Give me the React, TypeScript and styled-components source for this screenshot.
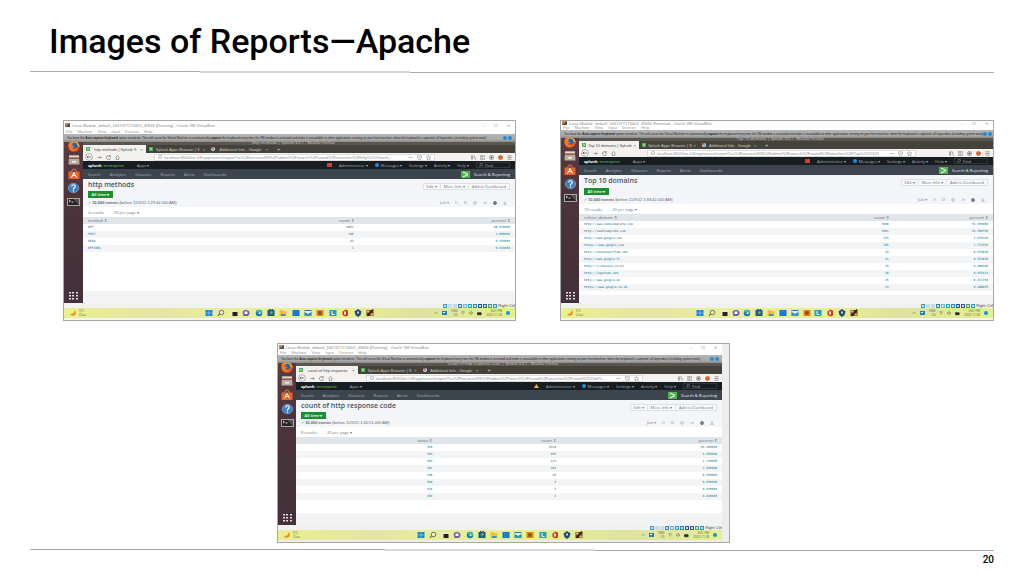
import React from "react";
import styled, { createGlobalStyle, css } from "styled-components";

const Global = createGlobalStyle`
  *, *::before, *::after { box-sizing: border-box; }
  body { margin: 0; background: #fff; }
  button, input { font: inherit; color: inherit; margin: 0; padding: 0; border: 0; background: none; }
  a { color: inherit; text-decoration: none; }
`;

/* ---------- slide ---------- */
const Slide = styled.main`
  min-height: 100vh;
  display: flex;
  flex-direction: column;
  padding: 0 30px;
  font-family: Roboto, sans-serif;
  color: #000;
`;
const Title = styled.h1`
  margin: 0;
  height: 71px;
  padding: 21px 0 0 19px;
  font-size: 34px;
  line-height: 40px;
  font-weight: 500;
  white-space: nowrap;
`;
const Rule = styled.div<{ $a: number; $b: number }>`
  display: grid;
  grid-template-columns: ${(p) => p.$a}fr ${(p) => p.$b}fr ${(p) => 964 - p.$a - p.$b}fr;
  height: 2px;
`;
const Seg = styled.span<{ $at: "top" | "both" | "bottom" }>`
  ${(p) => p.$at === "top" && css`border-top: 1px solid #a9a9a9;`}
  ${(p) => p.$at === "bottom" && css`border-bottom: 1px solid #a9a9a9;`}
  ${(p) => p.$at === "both" && css`background: #d4d5d4;`}
`;
const TopRow = styled.section`
  display: grid;
  grid-template-columns: 453fr 434fr;
  gap: 44px;
  min-height: 201px;
  margin: 47px 0 22px 33px;
`;
const BottomRow = styled.section`
  display: grid;
  grid-template-columns: 247fr 453fr 264fr;
  min-height: 200px;
  margin-bottom: 6px;
`;
const PageNumber = styled.footer`
  padding-top: 3px;
  text-align: right;
  font-size: 10px;
  line-height: 12px;
  font-weight: 500;
`;

/* ---------- virtual machine window ---------- */
const Frame = styled.article<{ $strip?: boolean }>`
  grid-column: ${(p) => (p.$strip ? 2 : "auto")};
  min-width: 0;
  display: flex;
  flex-direction: column;
  border: 1px solid #a6a6a6;
  padding-right: ${(p) => (p.$strip ? 7 : 0)}px;
  background: ${(p) => (p.$strip ? "#ededed" : "#f4f4f4")};
  font-family: "Open Sans", sans-serif;
  font-size: 4px;
  line-height: 5px;
  white-space: nowrap;
  overflow: hidden;
`;
const WinBar = styled.header<{ $h: number }>`
  height: ${(p) => p.$h}px;
  padding: 0 5px 0 1px;
  display: flex;
  align-items: center;
  justify-content: space-between;
  background: #fff;
  color: #8b8b8b;
  font-family: "Liberation Sans", sans-serif;
`;
const Inline = styled.span<{ $gap: number }>`
  display: flex;
  align-items: center;
  gap: ${(p) => p.$gap}px;
`;
const MenuBar = styled.nav`
  height: 5px;
  padding-left: 2px;
  display: flex;
  gap: 5px;
  background: #fff;
  color: #999;
  font-family: "Liberation Sans", sans-serif;
`;
const Warning = styled.div`
  height: 8px;
  padding: 0 3px;
  display: flex;
  align-items: center;
  justify-content: space-between;
  background: linear-gradient(#b4b4b4, #a8a8a8 70%, #8b8987);
  color: #1f1f1f;
  font-family: "Liberation Sans", sans-serif;
  font-size: 3px;
  overflow: hidden;
`;
const Desktop = styled.div<{ $side: number }>`
  flex: 1;
  display: grid;
  grid-template-columns: ${(p) => p.$side}px minmax(0, 1fr);
`;
const Launcher = styled.aside`
  display: flex;
  flex-direction: column;
  align-items: center;
  gap: 6px;
  padding-bottom: 3px;
  background: linear-gradient(#5c3b40, #4d343b 30%, #43303a);
`;
const Slot = styled.button`
  width: 12px;
  height: 8px;
  display: flex;
  align-items: center;
  justify-content: center;
  svg { flex: none; overflow: visible; }
  &:last-child { margin-top: auto; }
`;
const Browser = styled.div`
  display: flex;
  flex-direction: column;
  background: #fff;
`;
const BrowserTitle = styled.div`
  height: 3px;
  line-height: 1px;
  text-align: center;
  background: #5b564f;
  color: #d2cec6;
  padding-right: 12px;
`;
const Tabs = styled.div`
  height: 8px;
  display: flex;
  background: #45423b;
  color: #c8c5bd;
  font-family: "Liberation Sans", sans-serif;
`;
const Tab = styled.button<{ $on?: boolean }>`
  width: 14.5%;
  height: 8px;
  padding: 0 3px;
  display: flex;
  align-items: center;
  justify-content: space-between;
  line-height: 5px;
  ${(p) => p.$on && css`background: #f3f2f0; color: #4a4a48;`}
`;
const NewTab = styled.button`padding-left: 6px; font-size: 6px; line-height: 6px;`;
const AddressBar = styled.div`
  height: 8px;
  display: grid;
  grid-template-columns: 16.4% 65% 1fr;
  align-items: center;
  background: #f3f2f0;
  color: #666;
`;
const NavButtons = styled.div`
  display: flex;
  align-items: center;
  gap: 4px;
  padding-left: 2px;
`;
const UrlBox = styled.label`
  height: 7px;
  padding: 0 3px;
  display: flex;
  align-items: center;
  gap: 2px;
  border: 1px solid #dcdcdc;
  background: #fff;
  color: #888;
`;
const UrlInput = styled.input`
  flex: 1;
  min-width: 0;
  height: 5px;
  margin-right: 8px;
  outline: 0;
  font-family: "Liberation Sans", sans-serif;
  color: #8e8e8e;
`;
const Tools = styled.div`
  display: flex;
  align-items: center;
  justify-content: flex-end;
  gap: 4px;
  padding-right: 3px;
`;
const SplunkBar = styled.div`
  height: 8px;
  padding: 0 5px;
  display: flex;
  align-items: center;
  justify-content: space-between;
  background: #171d21;
  color: #a9afb3;
`;
const Brand = styled.b`
  margin-right: 13px;
  color: #fff;
  em { color: #5cae55; font-style: normal; font-weight: 600; }
`;
const Alert = styled.i<{ $warn?: boolean }>`
  width: 5px;
  height: 4px;
  background: ${(p) => (p.$warn ? "#f4b52c" : "#d6402f")};
  ${(p) => p.$warn && css`clip-path: polygon(50% 0, 100% 100%, 0 100%);`}
`;
const Dot = styled.i`width: 4px; height: 4px; border-radius: 2px; background: #1d8fd8;`;
const Find = styled.label`
  width: 34px;
  height: 6px;
  padding-left: 2px;
  display: flex;
  align-items: center;
  gap: 2px;
  border: 1px solid #30373c;
  input { width: 20px; height: 5px; }
  input::placeholder { color: #a9afb3; opacity: 1; }
`;
const AppNav = styled.nav`
  height: 10px;
  padding: 0 5px;
  display: flex;
  align-items: center;
  justify-content: space-between;
  background: #3c444d;
  color: #adb2b8;
`;
const AppName = styled.a`display: flex; align-items: center; gap: 4px; color: #eef0f1;`;
const ReportHead = styled.section<{ $h: number }>`
  height: ${(p) => p.$h}px;
  padding: 2px 5px 2px;
  display: flex;
  justify-content: space-between;
  background: #f3f5f8;
  color: #5c6773;
`;
const Column = styled.div<{ $end?: boolean }>`
  display: flex;
  flex-direction: column;
  justify-content: space-between;
  align-items: ${(p) => (p.$end ? "flex-end" : "flex-start")};
`;
const ReportTitle = styled.h2`
  margin: 0;
  font-size: 7px;
  line-height: 8px;
  font-weight: 600;
  color: #4a525b;
`;
const TimeButton = styled.button`
  width: 25px;
  height: 7px;
  background: #1b8e2d;
  color: #fff;
  line-height: 5px;
  font-weight: 600;
`;
const Events = styled.p`
  margin: 0;
  font-family: "Liberation Sans", sans-serif;
  i { color: #3f9c4e; font-style: normal; }
`;
const ButtonGroup = styled.div`display: flex; padding-top: 2px;`;
const GroupButton = styled.button`
  height: 7px;
  padding: 0 3px;
  line-height: 5px;
  border: 1px solid #dde1e5;
  margin-left: -1px;
  background: #f9fafb;
  color: #6b757f;
`;
const JobRow = styled.div`display: flex; align-items: center; gap: 6px; padding-right: 3px; color: #7d868f;`;
const Results = styled.div`
  height: 10px;
  padding: 0 5px;
  display: flex;
  align-items: center;
  gap: 10px;
  color: #6b757f;
`;
const Data = styled.table`
  width: 100%;
  table-layout: fixed;
  border-collapse: collapse;
  line-height: 5px;
  th, td { height: 7px; padding: 0 5px; text-align: right; }
  th { background: #e0e5ea; color: #5c6773; font-weight: 400; }
  td { color: #5797b0; font-family: "DejaVu Sans Mono", monospace; font-size: 3px; font-weight: 700; }
  tr:nth-child(even) td { background: #f3f4f6; }
`;
const Col = styled.col<{ $w: number }>`width: ${(p) => p.$w}%;`;
const Cell = styled.td<{ $left: boolean }>`&& { text-align: ${(p) => (p.$left ? "left" : "right")}; }`;
const Head = styled.th<{ $left: boolean }>`&& { text-align: ${(p) => (p.$left ? "left" : "right")}; }`;
const PageFoot = styled.div<{ $h: number }>`height: ${(p) => p.$h}px; margin-top: auto; background: #f2f3f5;`;
const StatusBar = styled.div`
  height: 5px;
  display: flex;
  align-items: center;
  justify-content: flex-end;
  gap: 1px;
  background: #f1f1f0;
  color: #444;
  font-family: "Liberation Sans", sans-serif;
  overflow: hidden;
`;
const StatusIcon = styled.i<{ $c: string }>`
  width: 4px;
  height: 4px;
  border: 1px solid ${(p) => p.$c};
  background: #bfe0f2;
`;
const Taskbar = styled.footer`
  height: 10px;
  margin-bottom: 2px;
  display: grid;
  grid-template-columns: 1fr 37.5% 1fr;
  align-items: center;
  background: linear-gradient(90deg, #e9f08e, #e3e5a6 22%, #e8ed9a 32%, #e6f08f 62%, #dde3a0 78%, #e4f08c);
  color: #5d604a;
`;
const Weather = styled.div`display: flex; align-items: center; gap: 2px; padding-left: 6px;`;
const Lines = styled.span`
  font-size: 3px;
  line-height: 4px;
  span { display: block; }
`;
const Apps = styled.div`display: flex; justify-content: space-between;`;
const AppButton = styled.button`width: 8px; height: 8px; display: flex;`;
const Tray = styled.div`display: flex; align-items: center; justify-content: flex-end; gap: 4px; padding-right: 5px; text-align: right;`;

/* ---------- drawings ---------- */
const Icon = ({ w = 5, children }: { w?: number; children: React.ReactNode }) => (
  <svg width={w} height={w} viewBox="0 0 12 12" fill="none" stroke="currentColor" strokeWidth="1.4" aria-hidden="true">{children}</svg>
);

const Firefox = () => (
  <svg width="12" height="11" viewBox="0 0 24 22">
    <ellipse cx="12" cy="11" rx="11" ry="10.5" fill="#e8541c" />
    <path d="M4 4Q10-1 17 2q7 4 6 11-2-6-8-7z" fill="#ffb42a" />
    <circle cx="12.5" cy="9" r="6" fill="#1c66b5" />
    <path d="M1 6q1-3 3-5 1 4 6 4l-2 4q2 1 5 1-2 5-6 3 3 5 10 3-5 6-11 3-6-4-5-13z" fill="#f47a20" />
  </svg>
);
const Files = () => (
  <svg width="12" height="10" viewBox="0 0 24 20">
    <path d="M2 1h20l1 18H1z" fill="#b9ada3" />
    <path d="M2 1h20v4H2z" fill="#ded6ce" />
    <path d="M2 5h20v3H2z" fill="#8d5b45" />
    <path d="M8 12h8v3H8z" fill="#f2eeea" />
  </svg>
);
const Software = () => (
  <svg width="12" height="10" viewBox="0 0 24 20">
    <path d="M1 5h22v15H1z" fill="#e8642a" />
    <path d="M7 5q1-5 5-5t5 5" stroke="#d9855e" strokeWidth="2" fill="none" />
    <path d="M7 17l5-10 5 10M9 13h6" stroke="#fff" strokeWidth="2" fill="none" />
  </svg>
);
const Help = () => (
  <svg width="11" height="10" viewBox="0 0 22 20">
    <ellipse cx="11" cy="10" rx="10.5" ry="9.5" fill="#3a7fc0" stroke="#9fc5e6" />
    <path d="M7.500 7q0-3.500 3.500-3.500T14.500 7q0 2-3.500 4v2" stroke="#fff" strokeWidth="2.400" fill="none" />
    <circle cx="11" cy="16" r="1.500" fill="#fff" />
  </svg>
);
const Terminal = () => (
  <svg width="13" height="8" viewBox="0 0 26 16">
    <path d="M0 0h26v16H0z" fill="#a9a5a3" />
    <path d="M2 2h22v12H2z" fill="#2a2429" />
    <path d="M13 2h11v12z" fill="#57525a" />
    <path d="M4 4l3 2-3 2M9 8h4" stroke="#fff" strokeWidth="1.500" fill="none" />
  </svg>
);
const AppGrid = () => (
  <svg width="9" height="8" viewBox="0 0 9 8" fill="#e4dfe0">
    {[0, 3, 6].map((y) => [0, 3, 7].map((x) => <rect key={`${x}-${y}`} x={x} y={y} width="2" height="1.500" />))}
  </svg>
);
const Tile = ({ c, children }: { c: string; children?: React.ReactNode }) => (
  <svg width="8" height="8" viewBox="0 0 16 16" aria-hidden="true">
    <rect x="1" y="2" width="14" height="12" fill={c} />
    {children}
  </svg>
);
const taskIcons: [string, React.ReactNode][] = [
  ["Start", <Tile c="#1686d9"><path d="M8 2v12M1 8h14" stroke="#bfe3ee" strokeWidth="1" /></Tile>],
  ["Search", <Tile c="none"><circle cx="9" cy="7" r="4.500" fill="#eef3c8" stroke="#444" strokeWidth="1.500" /><path d="M5 10l-3 4" stroke="#444" strokeWidth="2" /></Tile>],
  ["Task view", <Tile c="none"><path d="M2 3h9v8H2z" fill="#e8e8e4" /><path d="M5 6h10v8H5z" fill="#222" /></Tile>],
  ["Chat", <Tile c="none"><path d="M1 8a7 6 0 1 1 8 6H2l1-3z" fill="#6a5cb8" /><path d="M5 5h6v5H5z" fill="#fff" /></Tile>],
  ["Edge", <Tile c="none"><circle cx="8" cy="8" r="6.500" fill="#1476c6" /><path d="M2 7q1-6 7-5 6 1 5 7H9q1-3-2-3T2 7z" fill="#3cc49a" /><circle cx="9" cy="8.500" r="2" fill="#f0f5dc" /></Tile>],
  ["Store", <Tile c="#17568f"><path d="M5 2V0h6v2" stroke="#17568f" fill="none" strokeWidth="2" /><path d="M5 5h6v6H5z" fill="#3b9a62" /><path d="M8 5h3v3H8z" fill="#e2a52c" /></Tile>],
  ["Explorer", <Tile c="none"><path d="M1 2h6l2 2h6v10H1z" fill="#f5bd3d" /><path d="M4 10h9v4H4z" fill="#3f8fd2" /></Tile>],
  ["Photos", <Tile c="#0b74d1"><rect x="5" y="5" width="6" height="6" fill="none" stroke="#2f9fe6" strokeWidth="1" /></Tile>],
  ["Mail", <Tile c="#1c78bd"><path d="M1 6l7 4 7-4v-2H1z" fill="#e2f1fa" /><path d="M2 11h12v2H2z" fill="#43b0e6" /></Tile>],
  ["Editor", <Tile c="#ee7f1f"><path d="M5 5h6v6H5z" fill="#5d3214" /><path d="M6 8h5" stroke="#f7b16f" /></Tile>],
  ["Notes", <Tile c="#1e9ec0"><path d="M6 4v7h5" stroke="#fff" strokeWidth="2" fill="none" /></Tile>],
  ["Office", <Tile c="none"><path d="M9 1l5 2v10l-5 2-6-3V5z" fill="#d8371c" /><path d="M6 5h4v6H6z" fill="#f4ead2" /></Tile>],
  ["VirtualBox", <Tile c="none"><path d="M8 0l7 5-2 7-5 4-5-4-2-7z" fill="#24457e" /><path d="M6 5h4v4H6z" fill="#c4d2ea" /></Tile>],
  ["Machine", <Tile c="#6c3c20"><path d="M2 3h5v4H2zM9 9h5v4H9z" fill="#e8c05a" /><path d="M14 1L3 14" stroke="#222" strokeWidth="2.500" /></Tile>],
];
const statusColors = ["#3f9bd2", "#cfd8dc", "#cfd8dc", "#3784c4", "#7ab8dc", "#2e9bdb", "#2f87cc", "#2456a8", "#4c4da0", "#46a65b", "#2c94d8"];

/* ---------- report data ---------- */
type Report = {
  name: string;
  vm: string;
  tab: string;
  time: string;
  count: string;
  url: string;
  columns: string[];
  widths: number[];
  rows: string[][];
  titleH: number;
  headH: number;
  footH: number;
  side: number;
  leftFirst: boolean;
  warn?: boolean;
};

const methods: Report = {
  name: "http methods", vm: "1667477173403_49846", tab: "http methods | Splunk 9", time: "1:29:44.000 AM", count: "4 results",
  url: "http%2520meth...",
  columns: ["method", "count", "percent"], widths: [50, 13.8, 36.2],
  rows: [["GET", "9851", "98.510000"], ["POST", "106", "1.060000"], ["HEAD", "42", "0.420000"], ["OPTIONS", "1", "0.010000"]],
  titleH: 8, headH: 28, footH: 12, side: 19, leftFirst: true,
};
const domains: Report = {
  name: "Top 10 domains", vm: "1667477173403_49846", tab: "Top 10 domains | Splunk", time: "1:33:42.000 AM", count: "10 results",
  url: "Top%252010%2...",
  columns: ["referer_domain", "count", "percent"], widths: [60, 16, 24],
  rows: [
    ["http://www.semicomplete.com", "3038", "51.256960"],
    ["http://semicomplete.com", "2001", "33.760756"],
    ["http://www.google.com", "123", "2.075249"],
    ["https://www.google.com", "105", "1.771554"],
    ["http://stackoverflow.com", "34", "0.573646"],
    ["http://www.google.fr", "31", "0.523030"],
    ["http://s-chassis.co.nz", "29", "0.489286"],
    ["http://logstash.net", "28", "0.472414"],
    ["http://www.google.es", "25", "0.421799"],
    ["https://www.google.co.uk", "23", "0.388055"],
  ],
  titleH: 4, headH: 29, footH: 8, side: 18, leftFirst: true,
};
const codes: Report = {
  name: "count of http response code", vm: "1667477173403_49846", tab: "count of http response", time: "1:40:51.000 AM", count: "8 results",
  url: "count%2520of%...",
  columns: ["status", "count", "percent"], widths: [33.2, 29, 37.8],
  rows: [
    ["200", "9126", "91.260000"], ["304", "445", "4.450000"], ["404", "213", "2.130000"], ["301", "164", "1.640000"],
    ["206", "45", "0.450000"], ["500", "3", "0.030000"], ["416", "2", "0.020000"], ["403", "2", "0.020000"],
  ],
  titleH: 6, headH: 27, footH: 12, side: 18, leftFirst: false, warn: true,
};

const SplunkMark = () => <svg width="4" height="4" viewBox="0 0 4 4"><rect width="4" height="4" fill="#4aae50" /><path d="M1 1l2 1-2 1" stroke="#fff" strokeWidth=".5" fill="none" /></svg>;

function VmWindow({ r }: { r: Report }) {
  return (
    <Frame $strip={r.warn} aria-label={r.name}>
      <WinBar $h={r.titleH}>
        <Inline $gap={2}>
          <svg width="5" height="4" viewBox="0 0 5 4"><rect width="5" height="4" fill="#c9884a" /><path d="M0 4l5-4v4z" fill="#4b4f58" /></svg>
          Linux-Module_default_{r.vm} [Running] - Oracle VM VirtualBox
        </Inline>
        <Inline $gap={9}><span>–</span><span>❐</span><span>✕</span></Inline>
      </WinBar>
      <MenuBar>{["File", "Machine", "View", "Input", "Devices", "Help"].map((m) => <a href="#menu" key={m}>{m}</a>)}</MenuBar>
      <Warning>
        <span>You have the <b>Auto capture keyboard</b> option turned on. This will cause the Virtual Machine to automatically <b>capture</b> the keyboard every time the VM window is activated and make it unavailable to other applications running on your host machine: when the keyboard is captured, all keystrokes (including system ones)</span>
        <Inline $gap={1}><Dot /><Dot /></Inline>
      </Warning>
      <Desktop $side={r.side}>
        <Launcher>
          <Slot aria-label="Firefox"><Firefox /></Slot>
          <Slot aria-label="Files"><Files /></Slot>
          <Slot aria-label="Software"><Software /></Slot>
          <Slot aria-label="Help"><Help /></Slot>
          <Slot aria-label="Terminal"><Terminal /></Slot>
          <Slot aria-label="Applications"><AppGrid /></Slot>
        </Launcher>
        <Browser>
          <BrowserTitle>{r.name} | Splunk 9.0.1 - Mozilla Firefox</BrowserTitle>
          <Tabs>
            <Tab $on><SplunkMark /><span>{r.tab}</span><span>×</span></Tab>
            <Tab><SplunkMark /><span>Splunk Apps Browser | S</span><span>×</span></Tab>
            <Tab>
              <svg width="4" height="4" viewBox="0 0 4 4"><circle cx="2" cy="2" r="2" fill="#e6e6e6" /><circle cx="2" cy="2" r="1" fill="#4a86d8" /><path d="M0 2a2 2 0 0 1 3-2L2 1z" fill="#d8503f" /></svg>
              <span>Additional Info - Google</span><span>×</span>
            </Tab>
            <NewTab aria-label="New tab">+</NewTab>
          </Tabs>
          <AddressBar>
            <NavButtons>
              <Icon w={8}><circle cx="6" cy="6" r="5" fill="#fff" strokeWidth=".8" /><path d="M9 6H3l2-2M3 6l2 2" /></Icon>
              <Icon><path d="M1 6h9L7 3M10 6L7 9" /></Icon>
              <Icon><path d="M10 3A5 5 0 1 0 11 7M10 0v4H6" /></Icon>
              <Icon><path d="M1 6l5-5 5 5M3 6v5h6V6" /></Icon>
            </NavButtons>
            <UrlBox>
              <Icon w={4}><circle cx="6" cy="6" r="5" /><path d="M6 5v4" /></Icon>
              <UrlInput aria-label="Address" readOnly value={`localhost:8000/en-US/app/search/report?s=%2FservicesNS%2Fadmin%2Fsearch%2Fsaved%2Fsearches%2F${r.url}`} />
              <Inline $gap={4}><span>•••</span><Icon><path d="M1 2h10v4q-1 5-5 5T1 6zM4 5l2 2 2-2" /></Icon><Icon><path d="M6 1l1.500 3.500 4 .5-3 2.500 1 4L6 9l-3.500 2.500 1-4-3-2.500 4-.5z" /></Icon></Inline>
            </UrlBox>
            <Tools>
              <Icon><path d="M1 1v10M4 1v10M7 1l4 10" /></Icon>
              <Icon><path d="M0 2h12v8H0zM5 2v8" /></Icon>
              <Icon><circle cx="6" cy="6" r="5" /><circle cx="6" cy="6" r="2" fill="#555" /></Icon>
              <Icon><circle cx="6" cy="6" r="5" fill="#e0672c" stroke="#c64f28" /></Icon>
              <Icon><path d="M1 2h10M1 6h10M1 10h10" /></Icon>
            </Tools>
          </AddressBar>
          <SplunkBar>
            <Inline $gap={0}><Brand>splunk<em>&gt;enterprise</em></Brand><span>Apps ▾</span></Inline>
            <Inline $gap={7}>
              <Alert $warn={r.warn} /><span>Administrator ▾</span>
              <Inline $gap={2}><Dot /><span>Messages ▾</span></Inline>
              <span>Settings ▾</span><span>Activity ▾</span><span>Help ▾</span>
              <Find><Icon w={4}><circle cx="7" cy="5" r="4" /><path d="M4 8l-3 3" /></Icon><input aria-label="Find" placeholder="Find" /></Find>
            </Inline>
          </SplunkBar>
          <AppNav>
            <Inline $gap={9}>{["Search", "Analytics", "Datasets", "Reports", "Alerts", "Dashboards"].map((m) => <a href="#nav" key={m}>{m}</a>)}</Inline>
            <AppName href="#app">
              <svg width="9" height="7" viewBox="0 0 9 7"><rect width="9" height="7" fill="#53b453" /><path d="M2 1l5 2.500L2 6" stroke="#fff" fill="none" /></svg>
              Search &amp; Reporting
            </AppName>
          </AppNav>
          <ReportHead $h={r.headH}>
            <Column>
              <ReportTitle>{r.name}</ReportTitle>
              <TimeButton>All time ▾</TimeButton>
              <Events><i>✓</i> <b>10,000 events</b> (before 11/9/22 {r.time})</Events>
            </Column>
            <Column $end>
              <ButtonGroup><GroupButton>Edit ▾</GroupButton><GroupButton>More Info ▾</GroupButton><GroupButton>Add to Dashboard</GroupButton></ButtonGroup>
              <JobRow>
                <span>Job ▾</span>
                <Icon w={3}><path d="M3 1v10M9 1v10" /></Icon>
                <Icon w={3}><path d="M2 2h8v8H2z" /></Icon>
                <Icon w={4}><circle cx="6" cy="6" r="4" /></Icon>
                <Icon w={4}><path d="M1 8q3-4 9-3L8 3M10 5L8 8" /></Icon>
                <Icon w={4}><path d="M1 4h10v5H1zM3 1h6v10H3z" fill="#65707a" /></Icon>
                <Icon w={4}><path d="M6 1v7L3 5M6 8l3-3M1 11h10" /></Icon>
              </JobRow>
            </Column>
          </ReportHead>
          <Results><span>{r.count}</span><span>20 per page ▾</span></Results>
          <Data>
            <colgroup>{r.widths.map((w, i) => <Col key={i} $w={w} />)}</colgroup>
            <thead><tr>{r.columns.map((c, i) => <Head key={c} $left={i === 0 && r.leftFirst}>{c} ⇕</Head>)}</tr></thead>
            <tbody>{r.rows.map((row) => <tr key={row[0]}>{row.map((v, i) => <Cell key={i} $left={i === 0 && r.leftFirst}>{v}</Cell>)}</tr>)}</tbody>
          </Data>
          <PageFoot $h={r.footH} />
        </Browser>
      </Desktop>
      <StatusBar>{statusColors.map((c, i) => <StatusIcon key={i} $c={c} />)}<span>Right Ctrl</span></StatusBar>
      <Taskbar>
        <Weather>
          <svg width="7" height="6" viewBox="0 0 14 12"><path d="M9 0q6 7-1 11Q3 13 0 8q9 1 9-8z" fill="#f28c1e" /></svg>
          <Lines><span>9°C</span><span>Clear</span></Lines>
        </Weather>
        <Apps>{taskIcons.map(([n, icon]) => <AppButton key={n} aria-label={n}>{icon}</AppButton>)}</Apps>
        <Tray>
          <Icon w={4}><path d="M1 8l5-5 5 5" /></Icon>
          <svg width="5" height="4" viewBox="0 0 5 4"><rect width="5" height="4" fill="#2383bd" /><path d="M1 1h2v1H1z" fill="#fff" /></svg>
          <Lines><span>ENG</span><span>US</span></Lines>
          <Icon w={4}><path d="M0 4q6-5 12 0M3 7q3-3 6 0M6 9v2" /></Icon>
          <Icon w={4}><path d="M1 4h3l3-3v10L4 8H1zM10 3q2 3 0 6" /></Icon>
          <Icon w={5}><path d="M1 4h9v5H1z" fill="#222" stroke="#222" /></Icon>
          <Lines><span>8:41 PM</span><span>2022-11-08</span></Lines>
          <Dot />
        </Tray>
      </Taskbar>
    </Frame>
  );
}

export default function App() {
  return (
    <>
      <Global />
      <Slide>
        <Title>Images of Reports—Apache</Title>
        <Rule $a={170} $b={210}><Seg $at="top" /><Seg $at="both" /><Seg $at="bottom" /></Rule>
        <TopRow>
          <VmWindow r={methods} />
          <VmWindow r={domains} />
        </TopRow>
        <BottomRow>
          <VmWindow r={codes} />
        </BottomRow>
        <Rule $a={355} $b={210}><Seg $at="top" /><Seg $at="both" /><Seg $at="bottom" /></Rule>
        <PageNumber>20</PageNumber>
      </Slide>
    </>
  );
}
